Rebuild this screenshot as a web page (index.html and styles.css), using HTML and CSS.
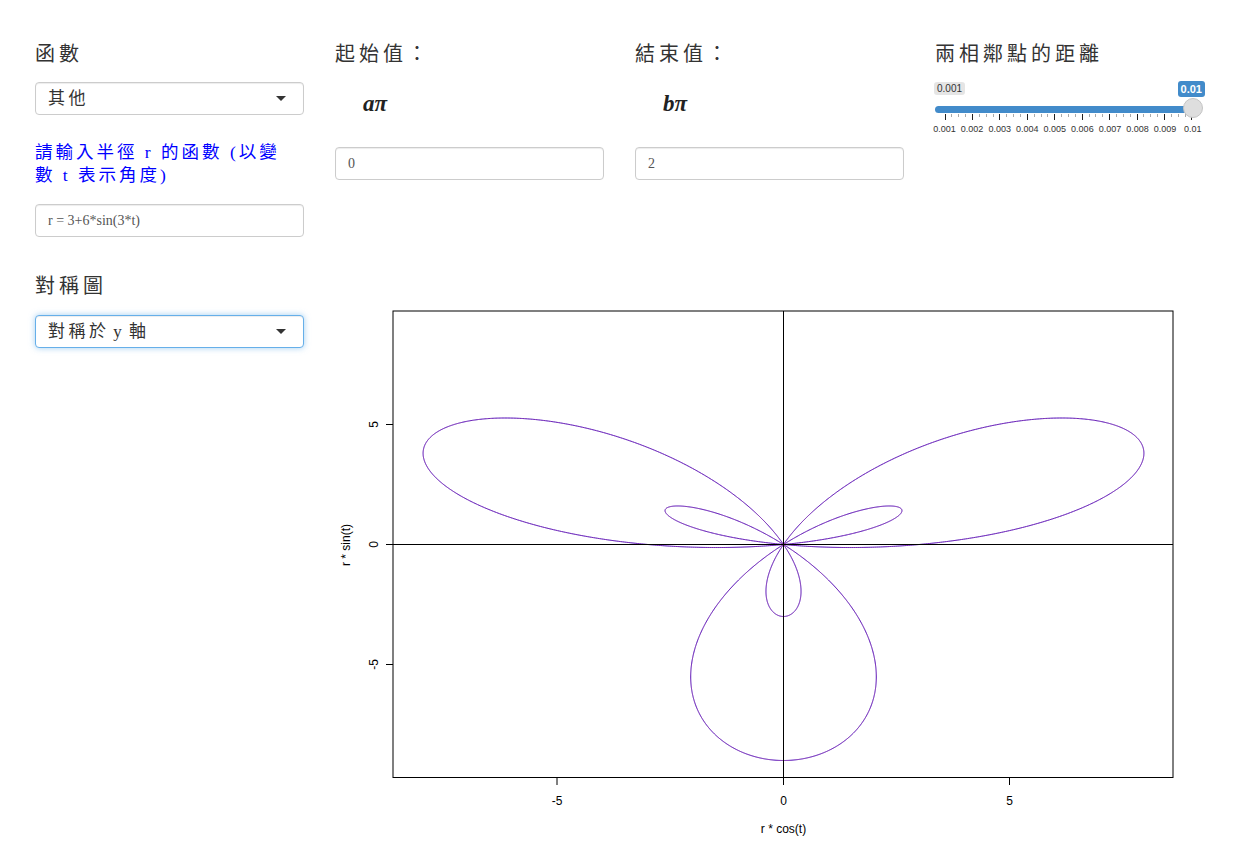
FILE: index.html
```html
<!DOCTYPE html>
<html lang="zh-Hant">
<head>
<meta charset="utf-8">
<title>極座標圖</title>
<link rel="stylesheet" href="styles.css">
</head>
<body>
<div class="page">
  <div class="row row-top">
    <div class="col">
      <div class="label">函數</div>
      <div class="select"><span class="select-text">其他</span><i class="caret"></i></div>
      <div class="label-blue">請輸入半徑 r 的函數 (以變數 t 表示角度)</div>
      <input class="text" type="text" value="r = 3+6*sin(3*t)">
    </div>
    <div class="col">
      <div class="label">起始值：</div>
      <div class="math">aπ</div>
      <input class="text" type="text" value="0">
    </div>
    <div class="col">
      <div class="label">結束值：</div>
      <div class="math">bπ</div>
      <input class="text" type="text" value="2">
    </div>
    <div class="col">
      <div class="label">兩相鄰點的距離</div>
      <div class="slider">
        <div class="irs-labels">
          <span class="irs-min">0.001</span>
          <span class="irs-single">0.01</span>
        </div>
        <div class="irs-track"><span class="irs-handle"></span></div>
        <div class="irs-ticks">
          <i class="maj"></i><i></i><i></i><i></i>
          <i class="maj"></i><i></i><i></i><i></i>
          <i class="maj"></i><i></i><i></i><i></i>
          <i class="maj"></i><i></i><i></i><i></i>
          <i class="maj"></i><i></i><i></i><i></i>
          <i class="maj"></i><i></i><i></i><i></i>
          <i class="maj"></i><i></i><i></i><i></i>
          <i class="maj"></i><i></i><i></i><i></i>
          <i class="maj"></i><i></i><i></i><i></i>
          <i class="maj"></i>
        </div>
        <div class="irs-grid-text">
          <span>0.001</span><span>0.002</span><span>0.003</span><span>0.004</span><span>0.005</span>
          <span>0.006</span><span>0.007</span><span>0.008</span><span>0.009</span><span>0.01</span>
        </div>
      </div>
    </div>
  </div>
  <div class="row row-bottom">
    <div class="col">
      <div class="label">對稱圖</div>
      <div class="select focus"><span class="select-text tight">對稱於 y 軸</span><i class="caret"></i></div>
    </div>
    <div class="col-wide">
      <svg class="plot" width="870" height="575" viewBox="335 272 870 575" xmlns="http://www.w3.org/2000/svg">
        <path id="curve" d="" fill="none" stroke="#2f2fff" stroke-width="1"/>
        <path id="mirror" d="" fill="none" stroke="#ff2020" stroke-width="1" stroke-opacity="0.32"/>
        <rect x="393" y="311" width="780" height="466.5" fill="none" stroke="#000" stroke-width="1"/>
        <line x1="783.5" y1="311" x2="783.5" y2="777.5" stroke="#000" stroke-width="1"/>
        <line x1="393" y1="544.5" x2="1173" y2="544.5" stroke="#000" stroke-width="1"/>
        <g stroke="#000" stroke-width="1">
          <line x1="557" y1="777.5" x2="557" y2="785"/>
          <line x1="783.5" y1="777.5" x2="783.5" y2="785"/>
          <line x1="1009.5" y1="777.5" x2="1009.5" y2="785"/>
          <line x1="386" y1="424.5" x2="393" y2="424.5"/>
          <line x1="386" y1="544.5" x2="393" y2="544.5"/>
          <line x1="386" y1="664.5" x2="393" y2="664.5"/>
        </g>
        <g class="axis-text" text-anchor="middle">
          <text x="557" y="804.5">-5</text>
          <text x="783.5" y="804.5">0</text>
          <text x="1009.5" y="804.5">5</text>
          <text x="783.5" y="833">r * cos(t)</text>
          <text x="377.5" y="424.5" transform="rotate(-90 377.5 424.5)">5</text>
          <text x="377.5" y="544.5" transform="rotate(-90 377.5 544.5)">0</text>
          <text x="377.5" y="664.5" transform="rotate(-90 377.5 664.5)">-5</text>
          <text x="349.5" y="545" transform="rotate(-90 349.5 545)">r * sin(t)</text>
        </g>
      </svg>
    </div>
  </div>
</div>
<script src="script.js"></script>
</body>
</html>
```

FILE: styles.css
```css
* { box-sizing: border-box; }

html, body {
  margin: 0;
  padding: 0;
  background: #fff;
}

body {
  font-family: "Liberation Serif", "Noto Sans CJK TC", serif;
  color: #333;
}

.page {
  padding: 40px 20px 0 20px;
  width: 1240px;
  height: 847px;
  overflow: hidden;
}

.row {
  display: flex;
  align-items: flex-start;
}

.row-bottom {
  margin-top: 35px;
}

.col {
  width: 300px;
  padding: 0 16px 0 15px;
  display: flex;
  flex-direction: column;
}

.col-wide {
  width: 900px;
  padding: 0 15px;
}

.label {
  font-size: 20px;
  line-height: 28px;
  letter-spacing: 4px;
  color: #333;
  white-space: nowrap;
}

.select {
  margin-top: 14px;
  height: 33px;
  width: 100%;
  border: 1px solid #ccc;
  border-radius: 4px;
  background: #fff;
  display: flex;
  align-items: center;
  padding: 0 17px 0 12px;
  box-shadow: inset 0 1px 1px rgba(0, 0, 0, 0.075);
}

.row-bottom .select {
  margin-top: 15px;
}

.select.focus {
  border-color: #66afe9;
  box-shadow: inset 0 1px 1px rgba(0, 0, 0, 0.075), 0 0 6px rgba(102, 175, 233, 0.6);
}

.select-text {
  font-size: 17px;
  letter-spacing: 3.5px;
  color: #333;
  line-height: 20px;
}

.select-text.tight {
  word-spacing: -4px;
}

.caret {
  margin-left: auto;
  width: 0;
  height: 0;
  border-left: 5px solid transparent;
  border-right: 5px solid transparent;
  border-top: 5px solid #333;
}

.label-blue {
  margin-top: 26px;
  max-width: 262px;
  font-size: 17.5px;
  line-height: 23px;
  letter-spacing: 3px;
  word-spacing: 0;
  color: #0000ff;
}

.text {
  display: block;
  width: 100%;
  height: 33px;
  margin: 17px 0 0 0;
  padding: 0 12px;
  border: 1px solid #ccc;
  border-radius: 4px;
  background: #fff;
  font-family: "Liberation Serif", serif;
  font-size: 14px;
  color: #555;
  box-shadow: inset 0 1px 1px rgba(0, 0, 0, 0.075);
  outline: none;
}

.math {
  margin-top: 22px;
  height: 28px;
  line-height: 28px;
  padding-left: 28px;
  font-family: "Liberation Serif", serif;
  font-style: italic;
  font-weight: 700;
  font-size: 23px;
  color: #222;
}

.math + .text {
  margin-top: 29px;
}

/* slider */
.slider {
  width: 270px;
  font-family: "Liberation Sans", Arial, sans-serif;
}

.irs-labels {
  margin-top: 12.7px;
  height: 17px;
  display: flex;
  justify-content: space-between;
  align-items: flex-start;
}

.irs-min {
  margin-top: 1px;
  margin-left: -1px;
  font-size: 10px;
  line-height: 11px;
  padding: 1px 3px;
  border-radius: 3px;
  background: rgba(0, 0, 0, 0.1);
  color: #333;
}

.irs-single {
  font-size: 11px;
  font-weight: 700;
  line-height: 14.7px;
  padding: 1px 3px;
  border-radius: 3px;
  background: #428bca;
  color: #fff;
}

.irs-track {
  position: relative;
  margin-top: 8px;
  margin-right: 7px;
  height: 7px;
  border-radius: 4px;
  background: #428bca;
}

.irs-handle {
  position: absolute;
  right: -5px;
  top: -8px;
  width: 20px;
  height: 20px;
  border: 1px solid #c4c4c4;
  border-radius: 50%;
  background: #dedede;
}

.irs-ticks {
  margin: 1.3px 12.3px 0 9.5px;
  height: 6px;
  display: flex;
  justify-content: space-between;
  align-items: flex-start;
}

.irs-ticks i {
  display: block;
  width: 1px;
  height: 3px;
  background: #aaa;
}

.irs-ticks i.maj {
  height: 6px;
  background: #222;
}

.irs-grid-text {
  margin: 4px 0 0 -4.3px;
  display: flex;
  white-space: nowrap;
}

.irs-grid-text span {
  flex: none;
  width: 27.58px;
  text-align: center;
  font-size: 9px;
  line-height: 11px;
  color: #333;
}

/* plot */
.plot {
  display: block;
}

.axis-text {
  font-family: "Liberation Sans", Arial, sans-serif;
  font-size: 12px;
  fill: #000;
}
```

FILE: script.js
```js
(function () {
  var cx = 783.5, cy = 544.5, sx = 45.2, sy = 24;
  var a = "", b = "";
  var N = 2400;
  for (var i = 0; i <= N; i++) {
    var t = 2 * Math.PI * i / N;
    var r = 3 + 6 * Math.sin(3 * t);
    var x = r * Math.cos(t), y = r * Math.sin(t);
    var py = (cy - sy * y).toFixed(2);
    a += (i ? "L" : "M") + (cx + sx * x).toFixed(2) + " " + py;
    b += (i ? "L" : "M") + (cx - sx * x).toFixed(2) + " " + py;
  }
  document.getElementById("curve").setAttribute("d", a);
  document.getElementById("mirror").setAttribute("d", b);
})();
```
